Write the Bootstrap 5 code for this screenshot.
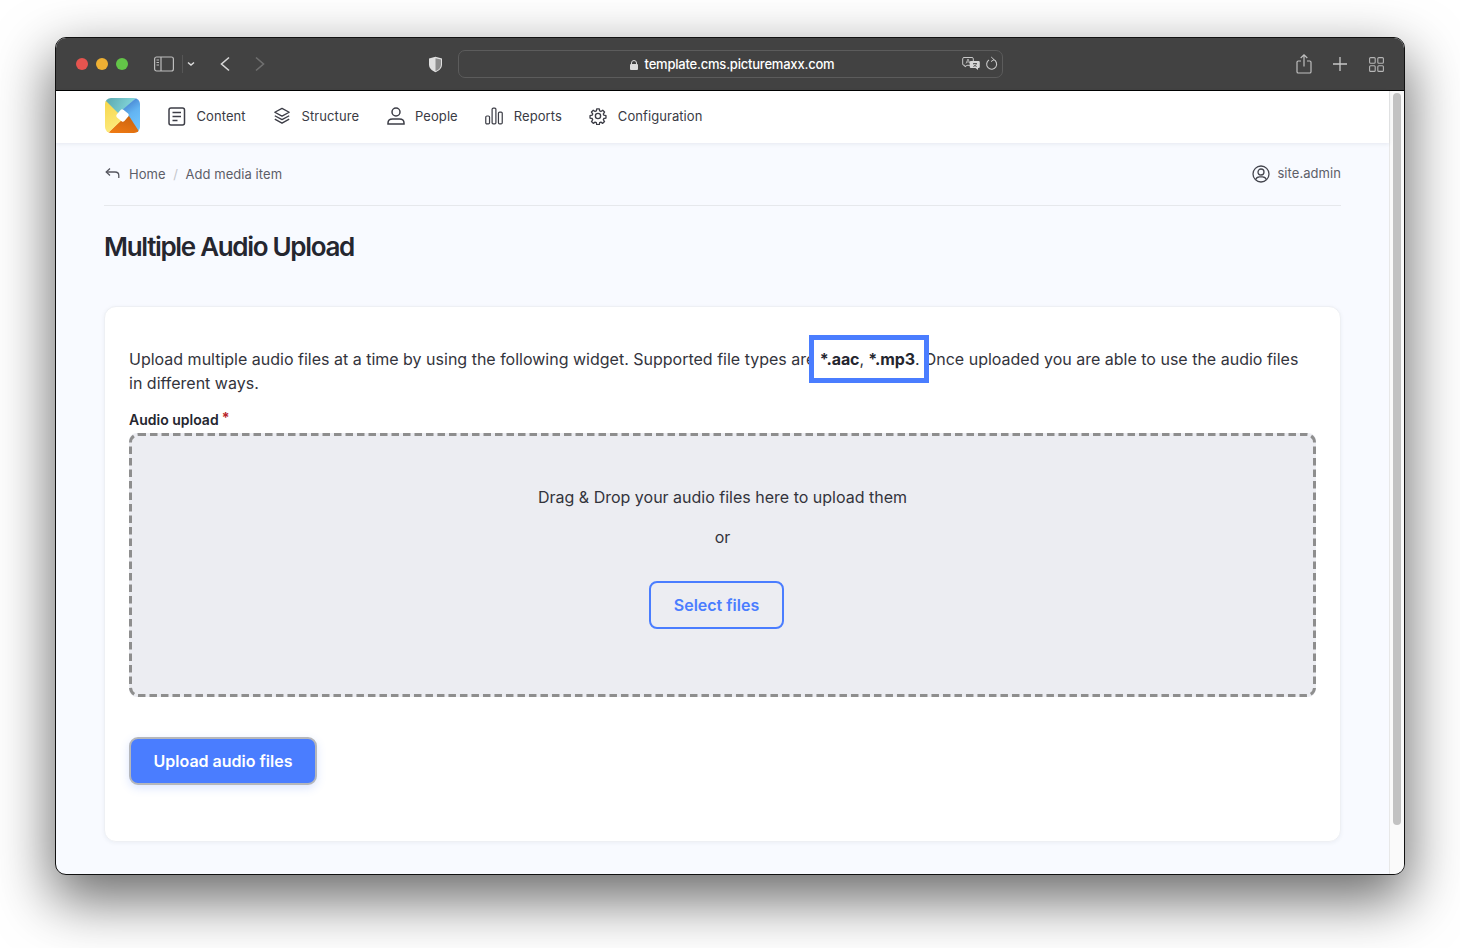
<!DOCTYPE html>
<html lang="en">
<head>
<meta charset="utf-8">
<title>Multiple Audio Upload</title>
<link href="https://cdn.jsdelivr.net/npm/bootstrap@5.3.0/dist/css/bootstrap.min.css" rel="stylesheet">
<style>
html,body{height:948px;overflow:hidden;background:#fff}
body{font-family:Inter,"Liberation Sans",sans-serif;color:#25262f;padding:37px 55px 73px}
.mac-win{width:1350px;height:838px;border-radius:11px;border:1px solid #111;overflow:hidden;background:#f8faff;box-shadow:0 22px 56px 3px rgba(0,0,0,.58);display:flex;flex-direction:column}
.mac-bar{height:53px;flex:none;background:#424242;border-bottom:1px solid #000;padding:0 20px;color:#ddd}
.tl{width:12px;height:12px;border-radius:50%}
.urlbox{width:545px;height:28px;border:1px solid #5c5c5c;border-radius:7px;margin-left:14px;color:#fff;font-size:13px;font-weight:500;letter-spacing:-.21px;position:relative;font-family:Inter,"Liberation Sans",sans-serif}
.url-center{position:absolute;left:3px;right:0;top:1px;bottom:0;display:flex;align-items:center;justify-content:center;gap:7px}
.url-r{position:absolute;right:4px;top:5px;display:flex;gap:5px;align-items:center}
.win-body{flex:1;min-height:0;display:flex}
.scroll-tr{width:15px;flex:none;background:#fafafa;border-left:1px solid #e8e8e8;padding:2px 3px 0 3px}
.scroll-th{height:732px;background:#c2c2c2;border-radius:4px}
.pg{flex:1;min-width:0;display:flex;flex-direction:column}
.topnav{height:52px;background:#fff;box-shadow:0 1px 4px rgba(40,50,90,.09);padding:0 0 0 49px;flex:none;position:relative}
.top-link{color:#3a3b44;font-size:13px;letter-spacing:.07px;text-decoration:none;display:flex;align-items:center;gap:10.5px}
.top-link svg{width:18px;margin-bottom:2px}
.top-links{gap:27.5px;margin-left:28px}
.pg-in{padding:0 48px 0 48px;flex:1}
.crumbs{height:63px;padding-top:2px;border-bottom:1px solid #e6e8ec;font-size:13px;letter-spacing:.06px;color:#5d5e68}
.crumbs .sep{color:#c4c6cc;margin:0 7.5px}
.pg-title{font-size:26px;font-weight:600;letter-spacing:-1.32px;line-height:34px;margin:24px 0 0;color:#25262f}
.sheet{margin-top:42px;height:536px;background:#fff;border:1px solid #eef0f4;border-radius:12px;box-shadow:0 1px 4px rgba(40,50,90,.06);padding:40px 24px 0}
.intro{font-size:16px;line-height:24px;margin:0;color:#33343c}
.hl{position:relative;z-index:0;font-weight:400;letter-spacing:-.1px}
.hl::before{content:"";position:absolute;z-index:-1;left:-10.500px;right:-9px;top:-14px;bottom:-14px;background:#fff;border:5px solid #4a7dff}
.hl b{font-weight:700;color:#25262f}
.fld-label{font-size:14px;font-weight:600;line-height:20px;margin-top:15px;color:#25262f}
.fld-label i{font-style:normal;font-weight:700;color:#b8262c;font-size:14px;position:relative;top:-2px;margin-left:3px}
.dropz{height:264px;margin-top:3px;background:#ecedf2;position:relative;border-radius:8px;text-align:center;color:#33343c;font-size:16px;line-height:24px;padding-top:52px}
.dropz svg{position:absolute;left:0;top:0;width:100%;height:100%}
.dropz rect{x:1.5px;y:1.5px;width:calc(100% - 3px);height:calc(100% - 3px)}
.dropz p{margin:0 0 16px}
.btn-sel{display:inline-block;width:135px;height:48px;margin:16px 12px 0 0;border:2px solid #4a7dff;border-radius:8px;color:#4a7dff;background:transparent;font-weight:600;font-size:16px;padding:0}
.btn-up{display:block;width:188px;height:48px;margin-top:40px;background:#4a7dff;color:#fff;border:2px solid #b5b7bb;border-radius:9px;font-weight:600;font-size:16px;padding:0;box-shadow:0 3px 10px rgba(74,125,255,.2)}
.btn-up:hover{background:#4a7dff;color:#fff;border-color:#b5b7bb}
</style>
</head>
<body>
<div class="mac-win">
  <div class="mac-bar d-flex align-items-center">
    <div class="d-flex gap-2"><div class="tl" style="background:#e5544f"></div><div class="tl" style="background:#eeb033"></div><div class="tl" style="background:#63c548"></div></div>
    <svg width="20" height="16" viewBox="0 0 20 16" fill="none" stroke="#bdbdbd" stroke-width="1.2" style="margin-left:26px"><rect x=".6" y="1" width="18.8" height="14" rx="2"/><path d="M7 1v14"/><path d="M2.5 4h2.500M2.500 6.500h2.500M2.500 9h2.500" stroke-width="1"/></svg>
    <div style="width:1px;height:18px;background:#565656;margin-left:8px"></div>
    <svg width="8" height="6" viewBox="0 0 8 6" fill="none" stroke="#ddd" stroke-width="1.500" style="margin-left:4px"><path d="M1 1.500l3 2.500 3-2.500"/></svg>
    <svg width="12" height="16" viewBox="0 0 12 16" fill="none" stroke="#d6d6d6" stroke-width="1.600" style="margin-left:24px"><path d="M10 1.500L2.500 8l7.500 6.500"/></svg>
    <svg width="12" height="16" viewBox="0 0 12 16" fill="none" stroke="#6f6f6f" stroke-width="1.600" style="margin-left:23px"><path d="M2 1.500L9.500 8 2 14.500"/></svg>
    <svg width="15" height="17" viewBox="0 0 15 17" style="margin-left:162px"><path d="M7.500.7L14 2.500v6c0 3.500-2.500 6-6.500 7.800C3.500 14.500 1 12 1 8.500v-6z" fill="#e0e0e0"/><path d="M7.500 2.200L13 3.500v5c0 3-2 5.200-5.500 6.800z" fill="#8d8d8d"/></svg>
    <div class="urlbox" style="margin-left:15px">
      <div class="url-center">
        <svg width="8" height="10" viewBox="0 0 8 10"><path d="M1.500 4V3a2.500 2.500 0 0 1 5 0v1" fill="none" stroke="#ddd" stroke-width="1"/><rect x="0" y="4" width="8" height="6" rx="1" fill="#ddd"/></svg>
        <span>template.cms.picturemaxx.com</span>
      </div>
      <div class="url-r">
        <svg width="18" height="15" viewBox="0 0 18 15"><path d="M2 1.500h8a1.300 1.300 0 0 1 1.300 1.300V8a1.300 1.300 0 0 1-1.300 1.300H5L3 11V9.300H2A1.300 1.300 0 0 1 .7 8V2.800A1.300 1.300 0 0 1 2 1.500z" fill="none" stroke="#c8c8c8"/><path d="M4 7.500l2-4.500 2 4.500M4.800 6h2.400" fill="none" stroke="#c8c8c8" stroke-width=".8"/><path d="M9 5h7.500a1.300 1.300 0 0 1 1.300 1.300v4.500a1.300 1.300 0 0 1-1.300 1.300H16V14l-2.500-1.900H9a1.300 1.300 0 0 1-1.300-1.300V6.300A1.300 1.300 0 0 1 9 5z" fill="#d6d6d6"/><path d="M11 7.500h4M13 7v.8M14.300 7.800c-.3 1.400-1.600 2.300-3 2.700M11.800 8.500c.5.9 1.500 1.600 2.900 2" fill="none" stroke="#424242" stroke-width=".8"/></svg>
        <svg width="13" height="15" viewBox="0 0 13 15" fill="none" stroke="#c8c8c8" stroke-width="1.100"><path d="M4 4a5 5 0 1 0 4.500-.4"/><path d="M6.200 1l2.800 2.600-3 2" stroke-width="1"/></svg>
      </div>
    </div>
    <svg class="ms-auto" width="16" height="20" viewBox="0 0 16 20" fill="none" stroke="#c0c0c0" stroke-width="1.200"><path d="M8 12.500V1M4.700 4L8 .9 11.300 4"/><path d="M5 7H2.300a1.300 1.300 0 0 0-1.300 1.300v9.400A1.300 1.300 0 0 0 2.300 19h11.400a1.300 1.300 0 0 0 1.300-1.300V8.300A1.300 1.300 0 0 0 13.700 7H11"/></svg>
    <svg width="14" height="14" viewBox="0 0 14 14" fill="none" stroke="#c8c8c8" stroke-width="1.300" style="margin-left:21px"><path d="M7 0v14M0 7h14"/></svg>
    <svg width="15" height="15" viewBox="0 0 15 15" fill="none" stroke="#b5b5b5" stroke-width="1.100" style="margin-left:22px"><rect x=".6" y=".6" width="5.600" height="5.600" rx="1"/><rect x="8.800" y=".6" width="5.600" height="5.600" rx="1"/><rect x=".6" y="8.800" width="5.600" height="5.600" rx="1"/><rect x="8.800" y="8.800" width="5.600" height="5.600" rx="1"/></svg>
  </div>

  <div class="win-body">
    <div class="pg">
      <div class="topnav d-flex align-items-center">
        <svg width="35" height="35" viewBox="0 0 35 35" style="margin-bottom:3px">
          <defs>
            <clipPath id="lg"><rect width="35" height="35" rx="6"/></clipPath>
            <linearGradient id="gt" x1="0" y1="0" x2="1" y2=".3"><stop offset="0" stop-color="#5aa6ad"/><stop offset="1" stop-color="#86dade"/></linearGradient>
            <linearGradient id="gr" x1=".2" y1="0" x2=".6" y2="1"><stop offset="0" stop-color="#3f74c4"/><stop offset=".5" stop-color="#63b4f2"/><stop offset="1" stop-color="#71c6ff"/></linearGradient>
            <linearGradient id="gb" x1=".2" y1="1" x2=".8" y2="0"><stop offset="0" stop-color="#ef7a13"/><stop offset="1" stop-color="#c9620f"/></linearGradient>
            <linearGradient id="gl" x1="0" y1="0" x2=".3" y2="1"><stop offset="0" stop-color="#f6d64a"/><stop offset="1" stop-color="#fdea7c"/></linearGradient>
          </defs>
          <g clip-path="url(#lg)">
            <rect width="35" height="35" fill="#fff"/>
            <polygon points="0,0 31,0 17,13 14,18 0,3" fill="url(#gt)"/>
            <polygon points="35,0 35,35 34,35 23,19 16,13 31,0" fill="url(#gr)"/>
            <polygon points="35,35 3,35 16,22 24,18" fill="url(#gb)"/>
            <polygon points="0,2 15,17 18,21 3,35 0,35" fill="url(#gl)"/>
            <rect x="12.500" y="12.500" width="10" height="10" rx="2" fill="#fff" transform="rotate(40 17.500 17.500)"/>
          </g>
        </svg>
        <div class="d-flex top-links">
          <a class="top-link" href="#"><svg height="19" viewBox="0 0 18 19" fill="none" stroke="#3d3e47" stroke-width="1.500"><rect x="1" y="1" width="15.500" height="17" rx="2"/><path d="M4.500 5.500h8.500M4.500 9.500h8.500M4.500 13.500h5"/></svg>Content</a>
          <a class="top-link" href="#"><svg height="18" viewBox="0 0 20 19" fill="none" stroke="#3d3e47" stroke-width="1.500" stroke-linejoin="round"><path d="M10 1l8 4.300-8 4.300-8-4.300z"/><path d="M2 9.200l8 4.300 8-4.300M2 13l8 4.500 8-4.500"/></svg>Structure</a>
          <a class="top-link" href="#"><svg height="18" viewBox="0 0 18 18" fill="none" stroke="#3d3e47" stroke-width="1.500"><circle cx="9" cy="5" r="4"/><path d="M1 17v-1c0-2.500 2-4 4.500-4h7c2.500 0 4.500 1.500 4.500 4v1z"/></svg>People</a>
          <a class="top-link" href="#"><svg height="18" viewBox="0 0 19 18" fill="none" stroke="#3d3e47" stroke-width="1.300"><rect x=".8" y="9" width="4" height="8.300" rx="1.200"/><rect x="7.500" y=".8" width="4" height="16.500" rx="1.200"/><rect x="14.200" y="5" width="4" height="12.300" rx="1.200"/></svg>Reports</a>
          <a class="top-link" href="#"><svg height="18" viewBox="0 0 24 24" fill="none" stroke="#3d3e47" stroke-width="1.800" stroke-linejoin="round"><circle cx="12" cy="12" r="3.500"/><path d="M10.300 2.500h3.400l.5 2.800 1.700.7 2.400-1.600 2.400 2.400-1.600 2.400.7 1.700 2.800.5v3.400l-2.800.5-.7 1.700 1.600 2.400-2.400 2.400-2.400-1.600-1.700.7-.5 2.800h-3.400l-.5-2.800-1.700-.7-2.400 1.600-2.400-2.400 1.600-2.400-.7-1.700-2.800-.5v-3.400l2.800-.5.700-1.700-1.600-2.400 2.400-2.400 2.400 1.600 1.700-.7z"/></svg>Configuration</a>
        </div>
      </div>
      <div class="pg-in">
        <div class="crumbs d-flex align-items-center justify-content-between">
          <div class="d-flex align-items-center">
            <svg width="15" height="13" viewBox="0 0 15 13" fill="none" stroke="#55565f" stroke-width="1.300" style="margin:0 9px 3px 1px"><path d="M5 1.500L1.200 5 5 8.500"/><path d="M1.200 5H10c2.500 0 3.800 1.500 3.800 3.500v2.500"/></svg>
            <span>Home</span><span class="sep">/</span><span>Add media item</span>
          </div>
          <div class="d-flex align-items-center" style="gap:7px;margin-top:-2px">
            <svg width="18" height="18" viewBox="0 0 18 18" fill="none" stroke="#44454e" stroke-width="1.300"><circle cx="9" cy="9" r="8"/><circle cx="9" cy="7" r="3"/><path d="M3.500 14.800c.7-2 2.300-3 4-3h3c1.700 0 3.300 1 4 3"/></svg>
            <span>site.admin</span>
          </div>
        </div>
        <h1 class="pg-title">Multiple Audio Upload</h1>
        <div class="sheet">
          <p class="intro">Upload multiple audio files at a time by using the following widget. Supported file types are <span class="hl"><b>*.aac</b>, <b>*.mp3</b>.</span> Once uploaded you are able to use the audio files in different ways.</p>
          <div class="fld-label">Audio upload<i>*</i></div>
          <div class="dropz">
            <svg aria-hidden="true"><rect rx="8" fill="none" stroke="#8e8e8e" stroke-width="3" stroke-dasharray="7.500 4"/></svg>
            <p class="position-relative">Drag &amp; Drop your audio files here to upload them</p>
            <p class="position-relative">or</p>
            <button class="btn-sel position-relative" type="button">Select files</button>
          </div>
          <button class="btn btn-up" type="button">Upload audio files</button>
        </div>
      </div>
    </div>
    <div class="scroll-tr"><div class="scroll-th"></div></div>
  </div>
</div>
<script src="https://cdn.jsdelivr.net/npm/bootstrap@5.3.0/dist/js/bootstrap.bundle.min.js"></script>
</body>
</html>
